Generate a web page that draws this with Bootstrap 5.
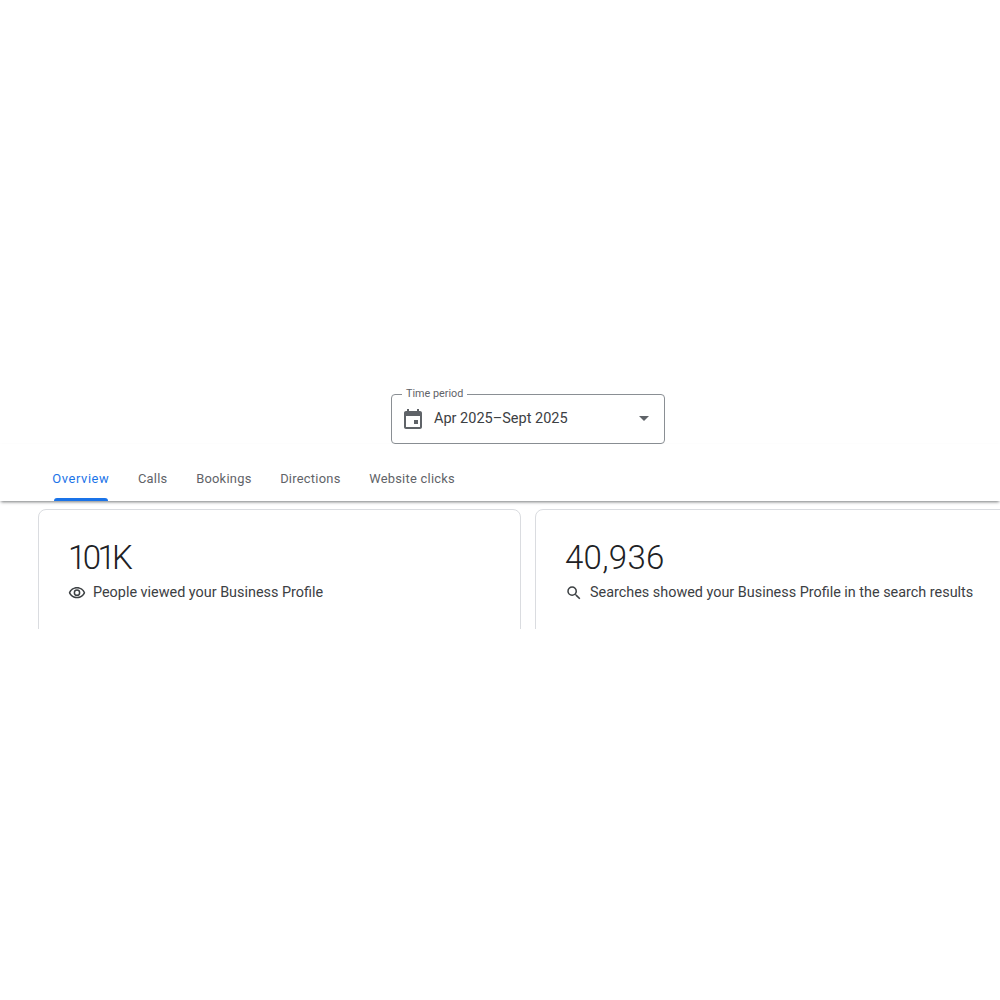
<!DOCTYPE html>
<html lang="en">
<head>
    <meta charset="UTF-8">
    <meta name="viewport" content="width=device-width, initial-scale=1.0">
    <title>Business Profile Performance</title>
    <link href="https://cdn.jsdelivr.net/npm/bootstrap@5.3.0/dist/css/bootstrap.min.css" rel="stylesheet">
    <style>
        html, body {
            height: 1000px;
            overflow: hidden;
        }
        body {
            background-color: #fff;
            font-family: "Roboto", "Liberation Sans", sans-serif;
            color: #202124;
        }
        .perf-head {
            padding-top: 393.5px;
        }
        .period-wrap {
            margin-left: 391px;
            width: 274px;
            height: 50px;
            border: 1px solid #8a8f94;
            border-radius: 4px;
            position: relative;
            padding: 0 9px;
            color: #3c4043;
        }
        .period-label {
            position: absolute;
            top: -8px;
            left: 10px;
            padding: 0 4px;
            background: #fff;
            font-size: 10.8px;
            line-height: 14px;
            color: #5f6368;
        }
        .period-value {
            font-size: 14.5px;
            margin-left: 9px;
        }
        .period-caret {
            margin-left: auto;
            margin-right: 6px;
            width: 0;
            height: 0;
            border-left: 5px solid transparent;
            border-right: 5px solid transparent;
            border-top: 5px solid #5f6368;
        }
        .tab-row {
            height: 57px;
            padding-left: 38px;
            box-shadow: 0 2px 3px -1px rgba(60, 64, 67, .7);
            position: relative;
            z-index: 1;
        }
        .tab-item {
            padding: 0 14.3px;
            height: 57px;
            line-height: 69px;
            font-size: 12.9px;
            letter-spacing: .25px;
            color: #5f6368;
            position: relative;
        }
        .tab-item.is-active {
            color: #1a73e8;
            letter-spacing: .6px;
        }
        .tab-item.is-active::after {
            content: "";
            position: absolute;
            left: 16px;
            right: 16px;
            bottom: 0;
            height: 3px;
            border-radius: 3px 3px 0 0;
            background: #1a73e8;
        }
        .stat-clip {
            height: 128.5px;
            overflow: hidden;
            padding: 8.5px 0 0 38px;
            gap: 14px;
            width: 1000px;
        }
        .stat-box {
            width: 483px;
            height: 200px;
            flex: none;
            border: 1px solid #dadce0;
            border-radius: 8px;
            padding: 28px 29px;
            background: #fff;
        }
        .stat-num {
            font-size: 33px;
            font-weight: 300;
            line-height: 40px;
            color: #202124;
        }
        .stat-num.num-tight {
            letter-spacing: -3.6px;
        }
        .stat-num.num-wide {
            letter-spacing: .3px;
        }
        .stat-text {
            font-size: 14.4px;
            line-height: 20px;
            color: #3c4043;
            margin-top: 5px;
            gap: 7px;
        }
        .stat-text svg {
            flex: none;
        }
    </style>
</head>
<body>

<div class="perf-head">
    <div class="period-wrap d-flex align-items-center">
        <span class="period-label">Time period</span>
        <svg width="24" height="24" viewBox="0 0 24 24" fill="#5f6368"><path d="M19 4h-1V2h-2v2H8V2H6v2H5c-1.11 0-2 .9-2 2v14c0 1.1.89 2 2 2h14c1.1 0 2-.9 2-2V6c0-1.1-.9-2-2-2zm0 16H5V9h14v11zM13 13h4v4h-4z"/></svg>
        <span class="period-value">Apr 2025–Sept 2025</span>
        <span class="period-caret"></span>
    </div>
</div>

<div class="tab-row d-flex">
    <div class="tab-item is-active">Overview</div>
    <div class="tab-item">Calls</div>
    <div class="tab-item">Bookings</div>
    <div class="tab-item">Directions</div>
    <div class="tab-item">Website clicks</div>
</div>

<div class="stat-clip d-flex">
    <div class="stat-box">
        <div class="stat-num num-tight">101K</div>
        <div class="stat-text d-flex align-items-center">
            <svg width="18" height="18" viewBox="0 0 24 24" fill="#3c4043"><path d="M12 6a9.77 9.77 0 0 1 8.82 5.5A9.77 9.77 0 0 1 12 17a9.77 9.77 0 0 1-8.82-5.5A9.77 9.77 0 0 1 12 6m0-2C7 4 2.73 7.11 1 11.5 2.73 15.89 7 19 12 19s9.27-3.11 11-7.5C21.27 7.11 17 4 12 4zm0 5a2.5 2.5 0 1 1 0 5 2.5 2.5 0 0 1 0-5m0-2a4.5 4.5 0 1 0 0 9 4.5 4.5 0 0 0 0-9z"/></svg>
            <span>People viewed your Business Profile</span>
        </div>
    </div>
    <div class="stat-box">
        <div class="stat-num num-wide">40,936</div>
        <div class="stat-text d-flex align-items-center">
            <svg width="18" height="18" viewBox="0 0 24 24" fill="#3c4043"><path d="M15.5 14h-.79l-.28-.27A6.47 6.47 0 0 0 16 9.5 6.5 6.5 0 1 0 9.5 16c1.61 0 3.09-.59 4.23-1.57l.27.28v.79l5 4.99L20.49 19l-4.99-5zm-6 0C7.01 14 5 11.99 5 9.5S7.01 5 9.5 5 14 7.01 14 9.5 11.99 14 9.5 14z"/></svg>
            <span>Searches showed your Business Profile in the search results</span>
        </div>
    </div>
</div>

<script src="https://cdn.jsdelivr.net/npm/bootstrap@5.3.0/dist/js/bootstrap.bundle.min.js"></script>
</body>
</html>
